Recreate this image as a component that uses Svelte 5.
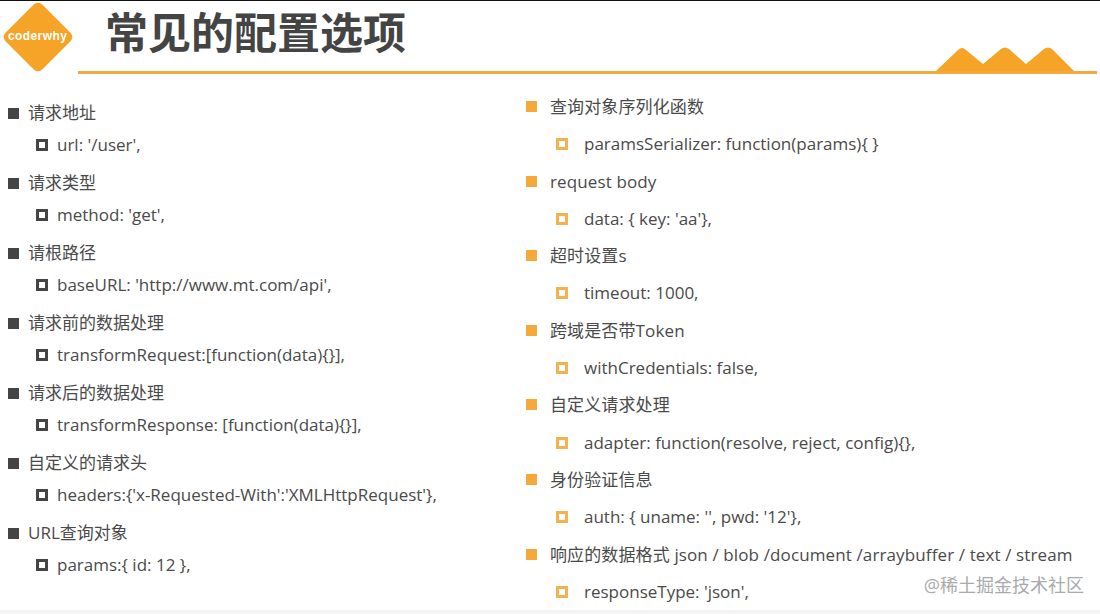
<script lang="ts">
  const left = [
    ['请求地址', "url: '/user',"],
    ['请求类型', "method: 'get',"],
    ['请根路径', "baseURL: 'http://www.mt.com/api',"],
    ['请求前的数据处理', 'transformRequest:[function(data){}],'],
    ['请求后的数据处理', 'transformResponse: [function(data){}],'],
    ['自定义的请求头', "headers:{'x-Requested-With':'XMLHttpRequest'},"],
    ['URL查询对象', 'params:{ id: 12 },']
  ];
  const right = [
    ['查询对象序列化函数', 'paramsSerializer: function(params){ }'],
    ['request body', "data: { key: 'aa'},"],
    ['超时设置s', 'timeout: 1000,'],
    ['跨域是否带Token', 'withCredentials: false,'],
    ['自定义请求处理', 'adapter: function(resolve, reject, config){},'],
    ['身份验证信息', "auth: { uname: '', pwd: '12'},"],
    ['响应的数据格式 json / blob /document /arraybuffer / text / stream', "responseType: 'json',"]
  ];
</script>

<div class="slide">
  <header class="head">
    <div class="logo"><div class="diamond"></div><span>coderwhy</span></div>
    <div class="head-main">
      <h1>常见的配置选项</h1>
      <svg class="peaks" width="140" height="28" viewBox="0 0 140 28">
        <path d="M0 26 L22 5 Q26 1 30 5 L47 19 L65 4 Q69 1 73 4 L90 19 L108 4 Q112 1 116 4 L138 26 Z" />
      </svg>
    </div>
  </header>

  <main class="cols">
    <ul class="col dark">
      {#each left as [title, sub]}
        <li class="title">{title}</li>
        <li class="sub">{sub}</li>
      {/each}
    </ul>
    <ul class="col accent">
      {#each right as [title, sub]}
        <li class="title">{title}</li>
        <li class="sub">{sub}</li>
      {/each}
    </ul>
  </main>
  <div class="mark">@稀土掘金技术社区</div>
</div>

<style>
  :global(body) {
    margin: 0;
    background: #fff;
  }

  .slide {
    position: relative;
    width: 1100px;
    height: 614px;
    overflow: hidden;
    background: #fff;
    border-top: 1px solid #111;
    border-bottom: 4px solid #f4f4f4;
    box-sizing: border-box;
    color: #4a4a4a;
    font-family: "Open Sans", "Noto Sans CJK SC", sans-serif;
    font-size: 17px;
  }

  .head {
    display: flex;
    height: 73px;
  }

  .logo {
    position: relative;
    width: 78px;
    flex: none;
  }

  .diamond {
    position: absolute;
    left: 12px;
    top: 10px;
    width: 52px;
    height: 52px;
    border-radius: 6px;
    background: #f5a428;
    transform: rotate(45deg);
  }

  .logo span {
    position: absolute;
    left: 8px;
    top: 28px;
    color: #fff;
    font: 700 12px "Liberation Sans", sans-serif;
    letter-spacing: 0.4px;
  }

  .head-main {
    position: relative;
    flex: 1;
    margin-right: 3px;
    border-bottom: 3px solid #f2a93f;
  }

  h1 {
    margin: 3px 0 0 27px;
    color: #444;
    font-size: 43px;
    line-height: 52px;
    font-weight: 700;
    font-family: "Noto Sans CJK SC", sans-serif;
  }

  .peaks {
    position: absolute;
    right: 21px;
    bottom: -2px;
    fill: #f5a428;
  }

  .cols {
    display: grid;
    grid-template-columns: 515px 1fr;
  }

  .col {
    margin: 0;
    padding: 0;
    list-style: none;
  }

  .col li {
    position: relative;
    white-space: nowrap;
  }

  .col li::before {
    content: "";
    position: absolute;
    box-sizing: border-box;
  }

  .dark {
    padding: 23px 0 0 28px;
  }

  .dark .title {
    height: 32px;
    line-height: 32px;
  }

  .dark .sub {
    height: 38px;
    line-height: 32px;
    padding-left: 29px;
  }

  .dark .title::before {
    left: -20px;
    top: 11px;
    width: 11px;
    height: 11px;
    background: #444;
  }

  .dark .sub::before {
    left: 8px;
    top: 10px;
    width: 12px;
    height: 12px;
    border: 3px solid #444;
  }

  .accent {
    padding: 14px 0 0 35px;
  }

  .accent li {
    height: 37.3px;
    line-height: 37.3px;
  }

  .accent .title {
    letter-spacing: 0.12px;
  }

  .accent .sub {
    padding-left: 34px;
  }

  .accent .title::before {
    left: -24px;
    top: 13px;
    width: 11px;
    height: 11px;
    background: #f5a93c;
  }

  .accent .sub::before {
    left: 6px;
    top: 13px;
    width: 12px;
    height: 12px;
    border: 3px solid #f5b052;
  }

  .mark {
    position: absolute;
    right: 16px;
    bottom: 14px;
    color: #aaa;
    font-size: 18px;
    line-height: 22px;
  }
</style>
